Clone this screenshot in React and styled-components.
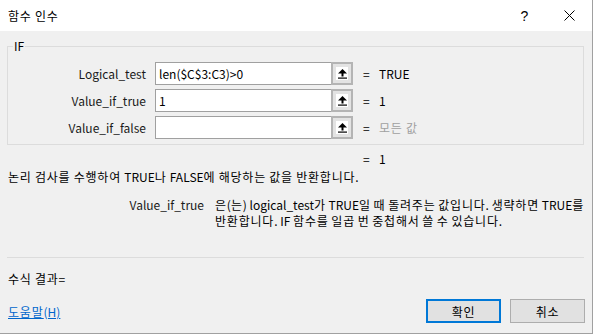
import React from 'react';
import styled, { createGlobalStyle } from 'styled-components';

const FONT = '"Noto Sans CJK KR", "Noto Sans", sans-serif';

const GlobalStyle = createGlobalStyle`
  html, body {
    margin: 0;
    padding: 0;
    background: #f0f0f0;
  }
  body {
    font-family: ${FONT};
    font-size: 12px;
    word-spacing: 0.5px;
    color: #000;
  }
`;

// Malgun Gothic sets hangul a little wider than Noto, so hangul runs get extra tracking
const Hangul = styled.span`
  letter-spacing: 0.8px;
`;

const HANGUL_RUN = /([\uAC00-\uD7A3]+)/;

const Ko = ({ children }) => (
  <>
    {String(children)
      .split(HANGUL_RUN)
      .map((part, i) => (HANGUL_RUN.test(part) ? <Hangul key={i}>{part}</Hangul> : part))}
  </>
);

const Dialog = styled.div`
  width: 593px;
  height: 334px;
  box-sizing: border-box;
  background: #f0f0f0;
  border-right: 1px solid #a0a0a0;
  border-bottom: 1px solid #a0a0a0;
  display: flex;
  flex-direction: column;
`;

const TitleBar = styled.div`
  height: 31px;
  flex: none;
  background: #fff;
  display: flex;
  align-items: center;
  padding-left: 8px;
`;

const Title = styled.span`
  font-size: 12px;
  flex: 1;
`;

const CaptionButton = styled.div`
  width: 45px;
  height: 31px;
  display: flex;
  align-items: center;
  justify-content: center;
  font-family: "Liberation Sans", sans-serif;
  font-size: 14px;
`;

const Body = styled.div`
  flex: 1;
  display: flex;
  flex-direction: column;
  padding: 15px 8px 0 7px;
`;

const Group = styled.div`
  position: relative;
  height: 99px;
  box-sizing: border-box;
  border: 1px solid #dcdcdc;
  padding: 15px 0 0 0;
  display: flex;
  flex-direction: column;
  gap: 4px;
`;

const Legend = styled.span`
  position: absolute;
  top: -9px;
  left: 5px;
  padding: 0 1px;
  background: #f0f0f0;
  line-height: 16px;
`;

const ArgRow = styled.div`
  display: flex;
  align-items: center;
  height: 23px;
`;

const ArgLabel = styled.div`
  width: 138px;
  text-align: right;
  margin-right: 9px;
  color: #1a1a1a;
`;

const ArgInput = styled.div`
  width: 176px;
  height: 23px;
  box-sizing: border-box;
  border: 1px solid #a0a0a0;
  border-right: none;
  background: #fff;
  padding-left: 3px;
  display: flex;
  align-items: center;
`;

const RefButton = styled.div`
  width: 22px;
  height: 23px;
  box-sizing: border-box;
  border: 2px solid #b4b4b4;
  background: #e3e3e3;
  display: flex;
  align-items: center;
  justify-content: center;
`;

const RefFace = styled.div`
  width: 12px;
  height: 13px;
  background: #fff;
  display: flex;
  align-items: center;
  justify-content: center;
`;

const Eq = styled.span`
  margin-left: 10px;
  width: 16px;
`;

const ArgValue = styled.span`
  color: ${p => (p.$muted ? '#a0a0a0' : '#000')};
`;

const ResultRow = styled.div`
  margin: 7px 0 0 346px;
  line-height: 14px;
  display: flex;
`;

const Description = styled.div`
  margin-top: 3px;
  padding-left: 1px;
  line-height: 16px;
  white-space: nowrap;
`;

const ArgHelp = styled.div`
  margin-top: 12px;
  display: grid;
  grid-template-columns: 197px 1fr;
  column-gap: 11px;
  line-height: 16px;
`;

const ArgHelpName = styled.div`
  text-align: right;
  color: #1a1a1a;
`;

const ArgHelpText = styled.div`
  white-space: nowrap;
  word-spacing: 0;
`;

const Separator = styled.div`
  margin-top: 28px;
  height: 1px;
  background: #dcdcdc;
`;

const FormulaResult = styled.div`
  margin-top: 13px;
  padding-left: 1px;
  line-height: 16px;
`;

const Footer = styled.div`
  margin-top: 12px;
  display: flex;
  align-items: center;
  gap: 9px;
`;

const HelpLink = styled.a`
  flex: 1;
  padding-left: 1px;
  color: #0066cc;
  text-decoration: underline;
  cursor: pointer;
`;

const Button = styled.button`
  width: 75px;
  height: 24px;
  box-sizing: border-box;
  font-family: ${FONT};
  font-size: 12px;
  color: #000;
  background: #e1e1e1;
  border: ${p => (p.$primary ? '2px solid #0078d7' : '1px solid #adadad')};
  padding: 0;
  margin-right: ${p => (p.$primary ? '0' : '-1px')};
`;

const RefIcon = () => (
  <svg width="9" height="10" viewBox="0 0 9 10">
    <polygon points="4.5,0 0,4.5 9,4.5" fill="#000" />
    <rect x="3.5" y="4" width="2" height="3.5" fill="#000" />
    <rect x="0" y="8.5" width="9" height="1.2" fill="#000" />
  </svg>
);

const CloseIcon = () => (
  <svg width="11" height="11" viewBox="0 0 11 11">
    <path d="M0.5 0.5 L10.5 10.5 M10.5 0.5 L0.5 10.5" stroke="#000" strokeWidth="1" />
  </svg>
);

const args = [
  { name: 'Logical_test', input: 'len($C$3:C3)>0', value: 'TRUE' },
  { name: 'Value_if_true', input: '1', value: '1' },
  { name: 'Value_if_false', input: '', value: '모든 값', muted: true },
];

const App = () => (
  <Dialog>
    <GlobalStyle />
    <TitleBar>
      <Title><Ko>함수 인수</Ko></Title>
      <CaptionButton>?</CaptionButton>
      <CaptionButton>
        <CloseIcon />
      </CaptionButton>
    </TitleBar>
    <Body>
      <Group>
        <Legend>IF</Legend>
        {args.map(a => (
          <ArgRow key={a.name}>
            <ArgLabel>{a.name}</ArgLabel>
            <ArgInput>{a.input}</ArgInput>
            <RefButton>
              <RefFace>
                <RefIcon />
              </RefFace>
            </RefButton>
            <Eq>=</Eq>
            <ArgValue $muted={a.muted}><Ko>{a.value}</Ko></ArgValue>
          </ArgRow>
        ))}
      </Group>
      <ResultRow>
        <Eq>=</Eq>
        <ArgValue>1</ArgValue>
      </ResultRow>
      <Description>
        <Ko>논리 검사를 수행하여 TRUE나 FALSE에 해당하는 값을 반환합니다.</Ko>
      </Description>
      <ArgHelp>
        <ArgHelpName>Value_if_true</ArgHelpName>
        <ArgHelpText>
          <Ko>은(는) logical_test가 TRUE일 때 돌려주는 값입니다. 생략하면 TRUE를</Ko>
          <br />
          <Ko>반환합니다. IF 함수를 일곱 번 중첩해서 쓸 수 있습니다.</Ko>
        </ArgHelpText>
      </ArgHelp>
      <Separator />
      <FormulaResult><Ko>수식 결과=</Ko></FormulaResult>
      <Footer>
        <HelpLink><Ko>도움말(H)</Ko></HelpLink>
        <Button $primary><Ko>확인</Ko></Button>
        <Button><Ko>취소</Ko></Button>
      </Footer>
    </Body>
  </Dialog>
);

export default App;
